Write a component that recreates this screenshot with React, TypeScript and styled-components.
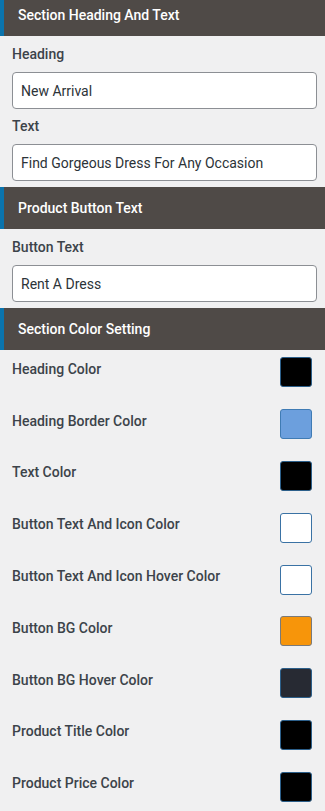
import { createGlobalStyle } from 'styled-components';
import styled from 'styled-components';

const GlobalStyle = createGlobalStyle`
  body {
    margin: 0;
    background: #f0f0f1;
    font-family: Roboto, "Liberation Sans", sans-serif;
  }
`;

const Panel = styled.div`
  width: 325px;
  margin-top: -6px;
  background: #f0f0f1;
`;

const SectionHeader = styled.div`
  height: 42px;
  display: flex;
  align-items: center;
  padding-left: 14px;
  border-left: 4px solid #0b74ad;
  background: #4f4a47;
  color: #fff;
  font-size: 14px;
  font-weight: 500;
`;

const Fields = styled.div`
  padding: 8px 8px 6px 12px;
`;

const Label = styled.div<{ $first?: boolean }>`
  margin-top: ${(p) => (p.$first ? 0 : 7)}px;
  margin-bottom: 8px;
  line-height: 20px;
  font-size: 14px;
  font-weight: 500;
  color: #3c434a;
`;

const TextInput = styled.input`
  box-sizing: border-box;
  display: block;
  width: 305px;
  height: 37px;
  margin: 0;
  padding: 0 8px;
  border: 1px solid #8c8f94;
  border-radius: 4px;
  background: #fff;
  font-family: Roboto, "Liberation Sans", sans-serif;
  font-size: 14px;
  color: #2c3338;
  outline: none;
`;

const ColorRow = styled.div`
  box-sizing: border-box;
  height: 51.8px;
  display: flex;
  align-items: flex-start;
  justify-content: space-between;
  padding: 7.4px 13px 0 12px;
`;

const ColorLabel = styled.span`
  padding-top: 1.5px;
  line-height: 20px;
  font-size: 14px;
  font-weight: 500;
  color: #3c434a;
`;

const Swatch = styled.span<{ $color: string; $edge: string }>`
  box-sizing: border-box;
  width: 32px;
  height: 30px;
  border: 1px solid ${(p) => p.$edge};
  border-radius: 3px;
  background: ${(p) => p.$color};
`;

const colors = [
  { label: 'Heading Color', color: '#000000', edge: '#2c5f8a' },
  { label: 'Heading Border Color', color: '#6c9fdd', edge: '#3f7bb4' },
  { label: 'Text Color', color: '#000000', edge: '#2c5f8a' },
  { label: 'Button Text And Icon Color', color: '#ffffff', edge: '#3a72a4' },
  { label: 'Button Text And Icon Hover Color', color: '#ffffff', edge: '#3a72a4' },
  { label: 'Button BG Color', color: '#f7950a', edge: '#7a7a7a' },
  { label: 'Button BG Hover Color', color: '#272a33', edge: '#2c5f8a' },
  { label: 'Product Title Color', color: '#000000', edge: '#2c5f8a' },
  { label: 'Product Price Color', color: '#000000', edge: '#2c5f8a' },
];

export default function App() {
  return (
    <>
      <GlobalStyle />
      <Panel>
        <SectionHeader>Section Heading And Text</SectionHeader>
        <Fields>
          <Label $first>Heading</Label>
          <TextInput defaultValue="New Arrival" />
          <Label>Text</Label>
          <TextInput defaultValue="Find Gorgeous Dress For Any Occasion" />
        </Fields>
        <SectionHeader>Product Button Text</SectionHeader>
        <Fields>
          <Label $first>Button Text</Label>
          <TextInput defaultValue="Rent A Dress" />
        </Fields>
        <SectionHeader>Section Color Setting</SectionHeader>
        {colors.map((c) => (
          <ColorRow key={c.label}>
            <ColorLabel>{c.label}</ColorLabel>
            <Swatch $color={c.color} $edge={c.edge} />
          </ColorRow>
        ))}
      </Panel>
    </>
  );
}
